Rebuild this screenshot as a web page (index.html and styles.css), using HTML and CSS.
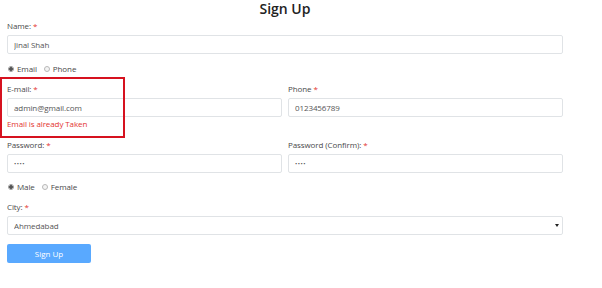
FILE: index.html
```html
<!DOCTYPE html>
<html lang="en">
<head>
    <meta charset="UTF-8">
    <meta name="viewport" content="width=device-width, initial-scale=1.0">
    <title>Sign Up</title>
    <link rel="stylesheet" href="styles.css">
</head>
<body>
    <form class="signup">
        <h1>Sign Up</h1>

        <div class="group">
            <label>Name: <span class="req">*</span></label>
            <input type="text" class="field" value="Jinal Shah">
        </div>

        <div class="radios">
            <label><input type="radio" name="contact" checked> Email</label>
            <label><input type="radio" name="contact"> Phone</label>
        </div>

        <div class="row">
            <div class="group">
                <label>E-mail: <span class="req">*</span></label>
                <input type="text" class="field" value="admin@gmail.com">
                <div class="error">Email is already Taken</div>
            </div>
            <div class="group">
                <label>Phone <span class="req">*</span></label>
                <input type="text" class="field" value="0123456789">
            </div>
        </div>

        <div class="row">
            <div class="group">
                <label>Password: <span class="req">*</span></label>
                <input type="password" class="field" value="1234">
            </div>
            <div class="group">
                <label>Password (Confirm): <span class="req">*</span></label>
                <input type="password" class="field" value="1234">
            </div>
        </div>

        <div class="radios gender">
            <label><input type="radio" name="gender" checked> Male</label>
            <label><input type="radio" name="gender"> Female</label>
        </div>

        <div class="group">
            <label>City: <span class="req">*</span></label>
            <div class="select-wrap">
                <select class="field">
                    <option>Ahmedabad</option>
                </select>
            </div>
        </div>

        <button type="button" class="btn">Sign Up</button>

        <div class="highlight"></div>
    </form>
</body>
</html>
```

FILE: styles.css
```css
body {
    margin: 0;
    font-family: "Open Sans", "Noto Sans", sans-serif;
    font-size: 8px;
    letter-spacing: -0.1px;
    color: #4a4a4a;
    background: #fff;
}
.signup {
    position: relative;
    width: 556px;
    margin-left: 7px;
}
h1 {
    margin: 0 0 2px;
    height: 18px;
    line-height: 17px;
    font-size: 14px;
    font-weight: 600;
    letter-spacing: 0;
    color: #222;
    text-align: center;
}
.group {
    margin-bottom: 9px;
}
.group label {
    display: block;
    line-height: 12px;
    margin-bottom: 3px;
}
.req {
    color: #e3342f;
}
.field {
    display: block;
    box-sizing: border-box;
    width: 100%;
    height: 19px;
    padding: 0 6px;
    border: 1px solid #e0e3e6;
    border-radius: 2px;
    font-family: inherit;
    font-size: 8px;
    letter-spacing: -0.1px;
    color: #555;
    background: #fff;
    outline: none;
}
.field[type="password"] {
    font-size: 6px;
    letter-spacing: 0.5px;
}
.error {
    margin-top: 1px;
    line-height: 12px;
    color: #e3342f;
}
.row {
    display: grid;
    grid-template-columns: 1fr 1fr;
    column-gap: 6px;
}
.radios {
    display: flex;
    gap: 6px;
    line-height: 12px;
    margin: 0 0 8px;
}
.radios.gender {
    margin-top: -1px;
}
.radios label {
    display: flex;
    align-items: center;
    gap: 3px;
}
.radios input {
    appearance: none;
    margin: 0 0 0 1px;
    width: 6px;
    height: 6px;
    border: 1px solid #b8b8b8;
    border-radius: 50%;
    background: #f4f4f4;
}
.radios input:checked {
    background: radial-gradient(circle, #555 0 1.6px, #f4f4f4 2px);
    border-color: #999;
}
.select-wrap {
    position: relative;
}
.select-wrap select {
    appearance: none;
}
.select-wrap::after {
    content: "";
    position: absolute;
    right: 4px;
    top: 8px;
    border-left: 2px solid transparent;
    border-right: 2px solid transparent;
    border-top: 3px solid #222;
}
.btn {
    display: block;
    width: 84px;
    height: 19px;
    border: none;
    border-radius: 2px;
    background: #59a9ff;
    color: #fff;
    font-family: inherit;
    font-size: 8px;
    padding: 0;
}
.highlight {
    position: absolute;
    left: -7px;
    top: 77px;
    width: 121px;
    height: 57px;
    border: 2px solid #d6121f;
    pointer-events: none;
}
```
